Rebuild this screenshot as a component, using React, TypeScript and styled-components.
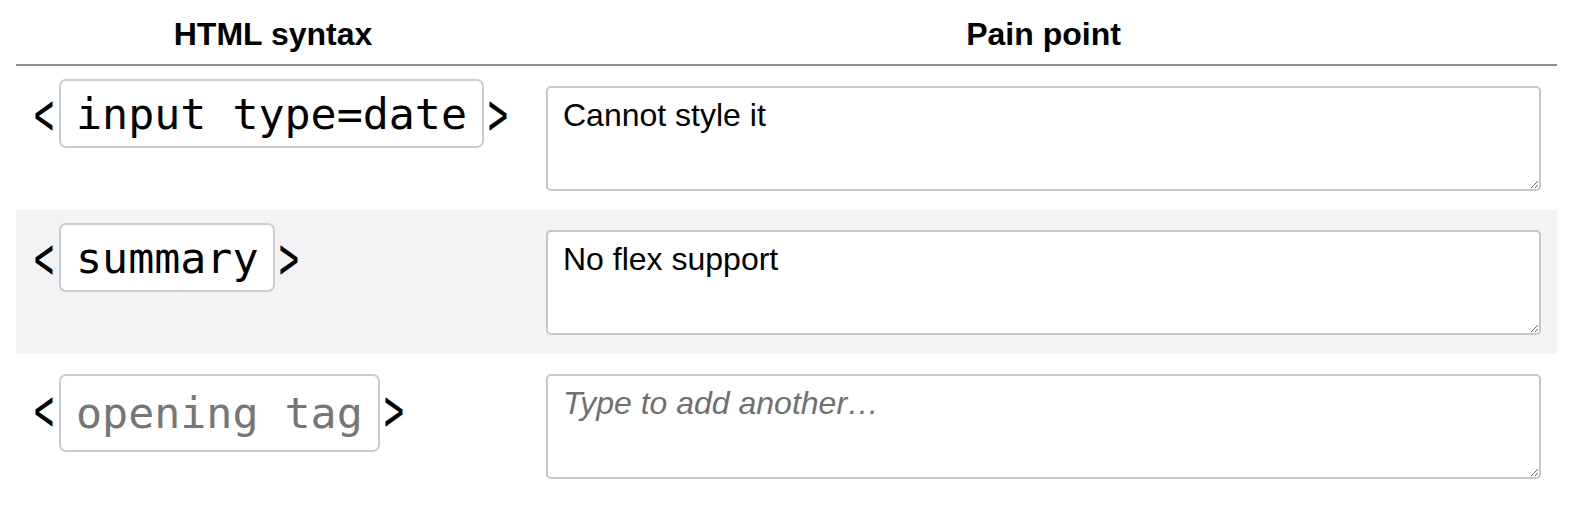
import styled, { createGlobalStyle } from "styled-components"

type Entry = {
    tag: string
    pain: string
}

const entries: Entry[] = [
    { tag: 'input type=date', pain: 'Cannot style it' },
    { tag: 'summary', pain: 'No flex support' },
]

export default function App(){
    return(
        <>
            <GlobalStyle/>
            <Page>
                <Row>
                    <HeaderCell>HTML syntax</HeaderCell>
                    <HeaderCell>Pain point</HeaderCell>
                </Row>
                {entries.map((entry, i) => (
                    <Row key={entry.tag} $striped={i % 2 === 1}>
                        <TagCell>
                            <TagLine>
                                <Bracket>&lt;</Bracket>
                                <Tag>{entry.tag}</Tag>
                                <Bracket>&gt;</Bracket>
                            </TagLine>
                        </TagCell>
                        <PainCell>
                            <PainInput defaultValue={entry.pain}/>
                        </PainCell>
                    </Row>
                ))}
                <Row>
                    <TagCell>
                        <TagLine>
                            <Bracket>&lt;</Bracket>
                            <Tag $placeholder>opening tag</Tag>
                            <Bracket>&gt;</Bracket>
                        </TagLine>
                    </TagCell>
                    <PainCell>
                        <PainInput placeholder="Type to add another…"/>
                    </PainCell>
                </Row>
            </Page>
        </>
    )
}

const GlobalStyle = createGlobalStyle`
    body {
        margin: 0;
        background: #ffffff;
        font-family: "Liberation Sans", Arial, sans-serif;
        color: #000000;
    }
`
const Page = styled.div`
    width: 1541px;
    margin-left: 16px;
`
const Row = styled.div<{ $striped?: boolean }>`
    display: grid;
    grid-template-columns: 514px 1fr;
    background: ${props => props.$striped ? '#f3f3f5' : 'transparent'};
`
const HeaderCell = styled.div`
    font-size: 32px;
    font-weight: 700;
    line-height: 37px;
    text-align: center;
    padding: 16px 16px 11px;
    border-bottom: 2px solid #8b8e96;
`
const TagCell = styled.div`
    padding: 13px 16px 0 19px;
`
const TagLine = styled.div`
    display: flex;
    align-items: center;
`
const Bracket = styled.span`
    display: inline-flex;
    justify-content: center;
    width: 18px;
    font-family: "DejaVu Sans Mono", monospace;
    font-size: 60px;
    line-height: 50px;
    transform: scaleX(0.55);
`
const Tag = styled.span<{ $placeholder?: boolean }>`
    font-family: "DejaVu Sans Mono", monospace;
    font-size: 43.3px;
    line-height: 50px;
    white-space: pre;
    color: ${props => props.$placeholder ? '#767676' : '#000000'};
    background: #ffffff;
    border: 2px solid #cbcdd2;
    border-radius: 7px;
    margin: ${props => props.$placeholder ? '7px 5px 0 6px' : '0 5px 0 6px'};
    padding: ${props => props.$placeholder ? '12px 15px' : '7.5px 15px'};
`
const PainCell = styled.div`
    padding: 20px 16px 19px;
`
const PainInput = styled.textarea`
    display: block;
    width: 100%;
    height: 105px;
    box-sizing: border-box;
    border: 2px solid #c5c7cc;
    border-radius: 5px;
    padding: 9px 15px;
    font-family: "Liberation Sans", Arial, sans-serif;
    font-size: 32px;
    color: #000000;
    background: #ffffff;
    resize: vertical;
    outline: none;

    &::placeholder {
        font-style: italic;
        color: #707070;
    }
`
